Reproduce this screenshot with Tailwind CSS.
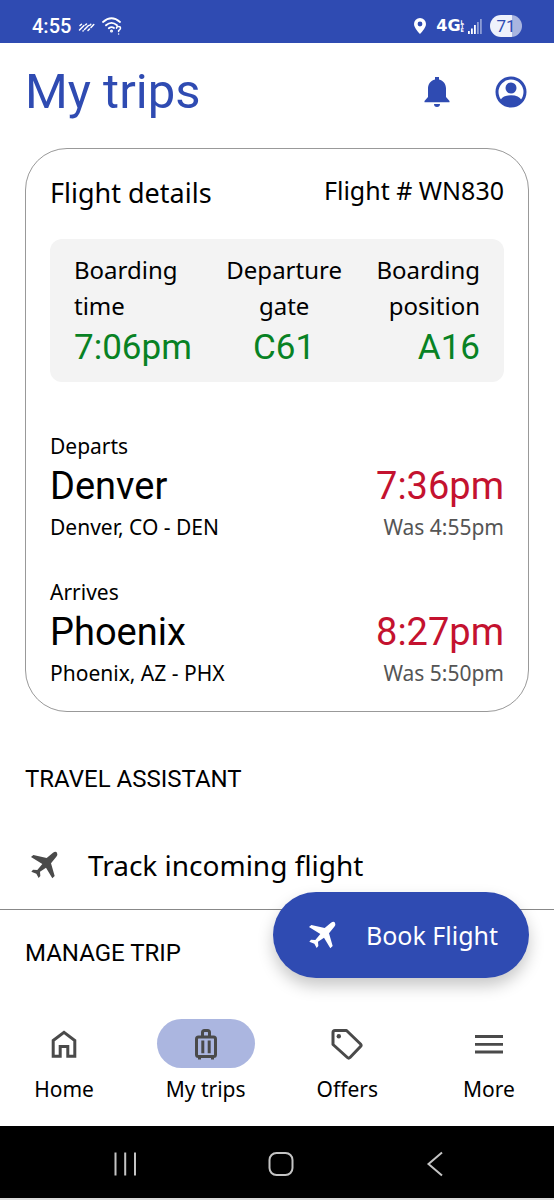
<!DOCTYPE html>
<html lang="en">
<head>
<meta charset="utf-8">
<meta name="viewport" content="width=device-width, initial-scale=1">
<title>My trips</title>
<script src="https://cdn.jsdelivr.net/npm/@tailwindcss/browser@4"></script>
</head>
<body class="flex min-h-screen flex-col bg-white font-['Noto_Sans',sans-serif] text-black">

<!-- Device status bar -->
<div class="flex h-[43px] items-center justify-between bg-[#2f4bb2] pt-2 pr-8 pl-8 text-white">
  <div class="flex items-center gap-[7px]">
    <span class="font-['Roboto',sans-serif] text-[20px] leading-6 font-medium">4:55</span>
    <svg class="h-5 w-[17px]" viewBox="0 0 17 20" fill="none" stroke="currentColor" stroke-width="1.5" stroke-linecap="round">
      <path d="M2 9.500 3.500 8.200M1.500 14 6 9.500M7.500 8.800 8.500 8M6.500 13.500 10.500 9.500M5 15 5.200 14.800M11.800 9.200 12.800 8.200M10 14.500 11.500 13M13 11.500 15.800 8.500"/>
    </svg>
    <svg class="h-5 w-5" viewBox="0 0 20 20" fill="none" stroke="currentColor" stroke-width="1.800" stroke-linecap="round">
      <path d="M1 6Q9.500-1.500 18 6M4 9.300Q9.500 4.500 15 9.300M6.800 12.300Q9.500 10.200 12 12"/>
      <circle cx="9.500" cy="15" r=".6"/>
      <path stroke-width="1.500" d="M14.500 12.200Q14.500 10.600 16.500 10.600T18.500 12.300Q18.500 13.500 16.600 14.600V15.500M16.600 18v.1"/>
    </svg>
  </div>
  <div class="flex items-center">
    <svg class="mr-2.5 h-4 w-3" viewBox="0 0 12 16" fill="currentColor"><path fill-rule="evenodd" d="M6 0a6 6 0 0 0-6 6c0 4.200 6 10 6 10s6-5.800 6-10a6 6 0 0 0-6-6Zm0 3.600a2.400 2.400 0 1 1 0 4.800 2.400 2.400 0 0 1 0-4.800Z"/></svg>
    <span class="font-['DejaVu_Sans',sans-serif] text-[16px] leading-4 font-bold">4G</span>
    <span class="mr-1 flex flex-col font-['DejaVu_Sans',sans-serif] text-[5px] leading-1 font-bold"><span>L</span><span>T</span><span>E</span></span>
    <svg class="mr-2 h-4 w-[14px]" viewBox="0 0 14 16" fill="currentColor">
      <path d="M0 13h1.800v3H0zM3 10.500h1.800V16H3zM6 7h1.800v9H6z"/>
      <path opacity=".45" d="M9 4h1.800v12H9zM12 1h1.800v15H12z"/>
    </svg>
    <span class="h-[22px] w-8 rounded-full bg-linear-to-r from-[#eef1fb] from-70% to-[#a9b5e0] to-70% text-center font-['Roboto',sans-serif] text-[17px] leading-[22px] text-[#2f4bb2]">71</span>
  </div>
</div>

<header class="flex h-[98px] items-center justify-between pr-[27px] pl-[25px] text-[#2f4bb2]">
  <h1 class="font-['Roboto',sans-serif] text-[49px] leading-[60px]">My trips</h1>
  <div class="flex items-center gap-11">
    <button type="button" aria-label="Notifications">
      <svg class="h-8 w-7" viewBox="0 0 28 32" fill="currentColor"><path d="M12 1h4v2.500C20.500 4.500 23 8.200 23 12.500V21l3.500 4v1.200H1.500V25L5 21v-8.500C5 8.200 7.500 4.500 12 3.500ZM11 28h6a3 2.900 0 0 1-6 0Z"/></svg>
    </button>
    <button type="button" aria-label="Account">
      <svg class="h-8 w-8" viewBox="0 0 32 32"><circle cx="16" cy="16" r="14" fill="none" stroke="currentColor" stroke-width="3"/><circle cx="16" cy="12" r="5.500" fill="currentColor"/><path fill="currentColor" d="M5.500 24Q8 19.300 16 19.300T26.500 24Q23 30 16 30T5.500 24Z"/></svg>
    </button>
  </div>
</header>

<div class="relative flex flex-1 flex-col">
<main class="flex-1">
  <section class="mx-[25px] mt-[7px] rounded-[42px] border border-[#999] px-6 pt-[26px] pb-[23px]">
    <div class="flex items-start justify-between">
      <h2 class="text-[27px] leading-9">Flight details</h2>
      <p class="text-[25px] leading-[30px]">Flight # WN830</p>
    </div>

    <dl class="mt-7 flex justify-between rounded-xl bg-[#f3f3f3] px-6 pt-[13px] pb-[10px] text-[24px] leading-9">
      <div>
        <dt>Boarding<br>time</dt>
        <dd class="font-['Roboto',sans-serif] text-[35px] leading-12 text-[#088224]">7:06pm</dd>
      </div>
      <div class="text-center">
        <dt>Departure<br>gate</dt>
        <dd class="font-['Roboto',sans-serif] text-[35px] leading-12 text-[#088224]">C61</dd>
      </div>
      <div class="text-right">
        <dt>Boarding<br>position</dt>
        <dd class="font-['Roboto',sans-serif] text-[35px] leading-12 text-[#088224]">A16</dd>
      </div>
    </dl>

    <div class="mt-[50px] flex items-end justify-between">
      <div>
        <p class="text-[21px] leading-7">Departs</p>
        <p class="font-['Roboto',sans-serif] text-[38px] leading-[52px]">Denver</p>
        <p class="text-[21px] leading-[30px]">Denver, CO - DEN</p>
      </div>
      <div class="text-right">
        <p class="font-['Roboto',sans-serif] text-[38px] leading-[52px] text-[#c4122f]">7:36pm</p>
        <p class="text-[21px] leading-[30px] text-[#555]">Was 4:55pm</p>
      </div>
    </div>

    <div class="mt-9 flex items-end justify-between">
      <div>
        <p class="text-[21px] leading-7">Arrives</p>
        <p class="font-['Roboto',sans-serif] text-[38px] leading-[52px]">Phoenix</p>
        <p class="text-[21px] leading-[30px]">Phoenix, AZ - PHX</p>
      </div>
      <div class="text-right">
        <p class="font-['Roboto',sans-serif] text-[38px] leading-[52px] text-[#c4122f]">8:27pm</p>
        <p class="text-[21px] leading-[30px] text-[#555]">Was 5:50pm</p>
      </div>
    </div>
  </section>

  <h2 class="mt-[51px] px-[25px] font-['Roboto',sans-serif] text-[24px] leading-8">TRAVEL ASSISTANT</h2>
  <a href="#track" class="mt-[27px] flex h-[88px] items-center gap-7 border-b border-[#888] px-[30px] pb-0.5 text-[28px] leading-9">
    <svg class="h-[30px] w-[30px] text-[#4a4a4a]" viewBox="0 0 90 90" fill="currentColor"><path d="M3 21 10 15 50 24 69 8Q77 3 81 8 84 14 79 20L63 40 74 78 67 85 48 53 30 65 31 78 26 84 19 71 4 65 9 59 22 60 37 42Z"/></svg>
    Track incoming flight
  </a>
  <h2 class="mt-[27px] px-[25px] font-['Roboto',sans-serif] text-[24px] leading-8">MANAGE TRIP</h2>
</main>

<!-- Floating action over the scrolling content -->
<button type="button" class="absolute right-[25px] bottom-[22px] z-10 flex h-[86px] items-center gap-7 rounded-full bg-[#2f4bb2] pr-[31px] pl-[35px] text-[25px] leading-8 text-white shadow-[0_8px_16px_rgba(0,0,0,0.22)]">
  <svg class="h-[30px] w-[30px]" viewBox="0 0 90 90" fill="currentColor"><path d="M3 21 10 15 50 24 69 8Q77 3 81 8 84 14 79 20L63 40 74 78 67 85 48 53 30 65 31 78 26 84 19 71 4 65 9 59 22 60 37 42Z"/></svg>
  Book Flight
</button>
</div>

<nav aria-label="Main" class="flex h-[126px] justify-between bg-white pt-[19px] pr-px text-[21px] leading-7">
  <a href="#home" class="flex w-32 flex-col items-center gap-[7px]">
    <span class="flex h-[49px] items-center justify-center"><svg class="h-8 w-8" viewBox="0 0 32 32" fill="none" stroke="#4a4a4a" stroke-width="3"><path d="M5.200 12.500 16 4.300l10.800 8.200v15.700h-7V18.500h-7.600v9.700h-7Z"/></svg></span>
    Home
  </a>
  <a href="#trips" aria-current="page" class="flex w-32 flex-col items-center gap-[7px]">
    <span class="flex h-[49px] w-[98px] items-center justify-center rounded-full bg-[#abb6e0]"><svg class="h-8 w-8" viewBox="0 0 32 32" fill="none" stroke="#4a4a4a" stroke-width="3"><rect x="6.500" y="9" width="19" height="19.500" rx="2"/><path d="M12.500 9V4.500q0-2 2-2h3q2 0 2 2V9M12.800 12.500v12.700M19.200 12.500v12.700M9.500 29v2.500M22.500 29v2.500"/></svg></span>
    My trips
  </a>
  <a href="#offers" class="flex w-32 flex-col items-center gap-[7px]">
    <span class="flex h-[49px] items-center justify-center"><svg class="h-8 w-8" viewBox="0 0 32 32" fill="none" stroke="#4a4a4a" stroke-width="3" stroke-linejoin="round"><path d="M2 4.500q0-2 2-2H15.500L29.500 16q1.200 1.300 0 2.600L19 29.500q-1.300 1.200-2.600 0L2 16.500Z"/><circle cx="7.800" cy="8.200" r="2.200" fill="#4a4a4a" stroke="none"/></svg></span>
    Offers
  </a>
  <a href="#more" class="flex w-32 flex-col items-center gap-[7px]">
    <span class="flex h-[49px] items-center justify-center"><svg class="h-8 w-8" viewBox="0 0 32 32" fill="none" stroke="#4a4a4a" stroke-width="2.800"><path d="M2 8.500h28M2 16.300h28M2 24h28"/></svg></span>
    More
  </a>
</nav>

<!-- Device navigation keys -->
<div class="flex h-[74px] items-center justify-between border-b-2 border-[#ddd] bg-black pt-1 pr-[103px] pl-[110px] text-[#c4c4c4]">
  <button type="button" aria-label="Recent apps"><svg class="h-[30px] w-[30px]" viewBox="0 0 30 30" fill="none" stroke="currentColor" stroke-width="2"><path d="M5.500 3.500v23M15.200 3.500v23M25 3.500v23"/></svg></button>
  <button type="button" aria-label="Home screen"><svg class="h-[30px] w-[30px]" viewBox="0 0 30 30" fill="none" stroke="currentColor" stroke-width="2"><rect x="3.500" y="4" width="23" height="22" rx="7"/></svg></button>
  <button type="button" aria-label="Back"><svg class="h-[30px] w-[30px]" viewBox="0 0 30 30" fill="none" stroke="currentColor" stroke-width="2"><path d="M21 3.500 7.500 15 21 26.500"/></svg></button>
</div>
</body>
</html>
